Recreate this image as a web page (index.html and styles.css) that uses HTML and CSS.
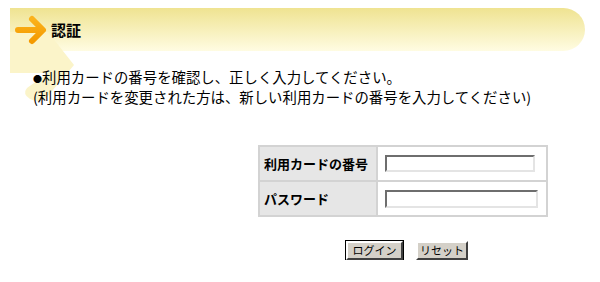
FILE: index.html
```html
<!DOCTYPE html>
<html lang="ja">
<head>
  <meta charset="UTF-8" />
  <title>認証</title>
  <link rel="stylesheet" href="styles.css">
</head>
<body>
  <svg class="deco" width="90" height="110" viewBox="0 0 90 110">
    <path d="M10 32 L48 32 L74 65 L47 97 Q40 104 30 99 Q22 94 27 88 L48 73 L10 73 Z" fill="#fbf4c9"/>
  </svg>
  <div class="title-bar">
    <svg class="arrow" width="34" height="34" viewBox="0 0 34 34">
      <defs>
        <linearGradient id="ag" x1="0" y1="0" x2="0" y2="1">
          <stop offset="0" stop-color="#fbb21c"/>
          <stop offset="1" stop-color="#f49a00"/>
        </linearGradient>
      </defs>
      <path d="M4 17 L28 17 M18 6 L29 17 L18 28" stroke="url(#ag)" stroke-width="6" stroke-linecap="round" stroke-linejoin="round" fill="none"/>
    </svg>
    <h1>認証</h1>
  </div>

  <div class="notice">
    <p><span class="bullet">●</span>利用カードの番号を確認し、正しく入力してください。</p>
    <p>(利用カードを変更された方は、新しい利用カードの番号を入力してください)</p>
  </div>

  <form class="auth-form">
    <table class="auth-table">
      <tr>
        <th>利用カードの番号</th>
        <td><input type="text" class="card-no"></td>
      </tr>
      <tr>
        <th>パスワード</th>
        <td><input type="password" class="password"></td>
      </tr>
    </table>
    <div class="buttons">
      <button type="submit" class="btn default">ログイン</button>
      <button type="reset" class="btn">リセット</button>
    </div>
  </form>
</body>
</html>
```

FILE: styles.css
```css
body {
  margin: 0;
  font-family: "Noto Sans CJK JP", "Liberation Sans", sans-serif;
  color: #000;
  background: #fff;
  position: relative;
}

.deco {
  position: absolute;
  left: 0;
  top: 0;
  z-index: 1;
}

.title-bar {
  display: flex;
  align-items: center;
  height: 43px;
  margin: 8px 15px 0 10px;
  padding-left: 4px;
  border-radius: 0 22px 22px 0;
  background: linear-gradient(#efe391, #fffce2);
}

.arrow {
  position: relative;
  z-index: 2;
}

.title-bar h1 {
  position: relative;
  z-index: 2;
  margin: 0 0 0 3px;
  font-size: 15px;
  font-weight: bold;
}

.notice {
  position: relative;
  z-index: 2;
  margin: 17px 0 0 33px;
  font-size: 14.4px;
  line-height: 18px;
}

.notice p {
  margin: 0;
}

.bullet {
  font-size: 9px;
  vertical-align: 1px;
}

.auth-form {
  margin: 39px 0 0 258px;
}

.auth-table {
  border-collapse: collapse;
  border: 2px solid #d3d3d3;
}

.auth-table th,
.auth-table td {
  border: 2px solid #d3d3d3;
  height: 33px;
  padding: 0;
}

.auth-table th {
  width: 112px;
  padding-left: 4px;
  background: #e6e6e6;
  text-align: left;
  font-size: 13px;
  font-weight: bold;
}

.auth-table td {
  width: 161px;
  padding-left: 7px;
}

.auth-table input {
  display: block;
  box-sizing: border-box;
  margin: 0;
  padding: 0 2px;
  border: 2px solid;
  border-color: #6e6e6e #e4e4e4 #e4e4e4 #6e6e6e;
  background: #fff;
}

.card-no {
  width: 150px;
  height: 17px;
}

.password {
  width: 153px;
  height: 18px;
}

.buttons {
  display: flex;
  gap: 13px;
  margin: 24px 0 0 88px;
}

.btn {
  box-sizing: border-box;
  width: 52px;
  height: 19px;
  padding: 0;
  font-family: "Noto Sans CJK JP", sans-serif;
  font-size: 11px;
  line-height: 15px;
  background: #d4d0c8;
  border: 2px solid;
  border-color: #fff #404040 #404040 #fff;
}

.btn.default {
  width: 57px;
  outline: 1px solid #000;
}
```
